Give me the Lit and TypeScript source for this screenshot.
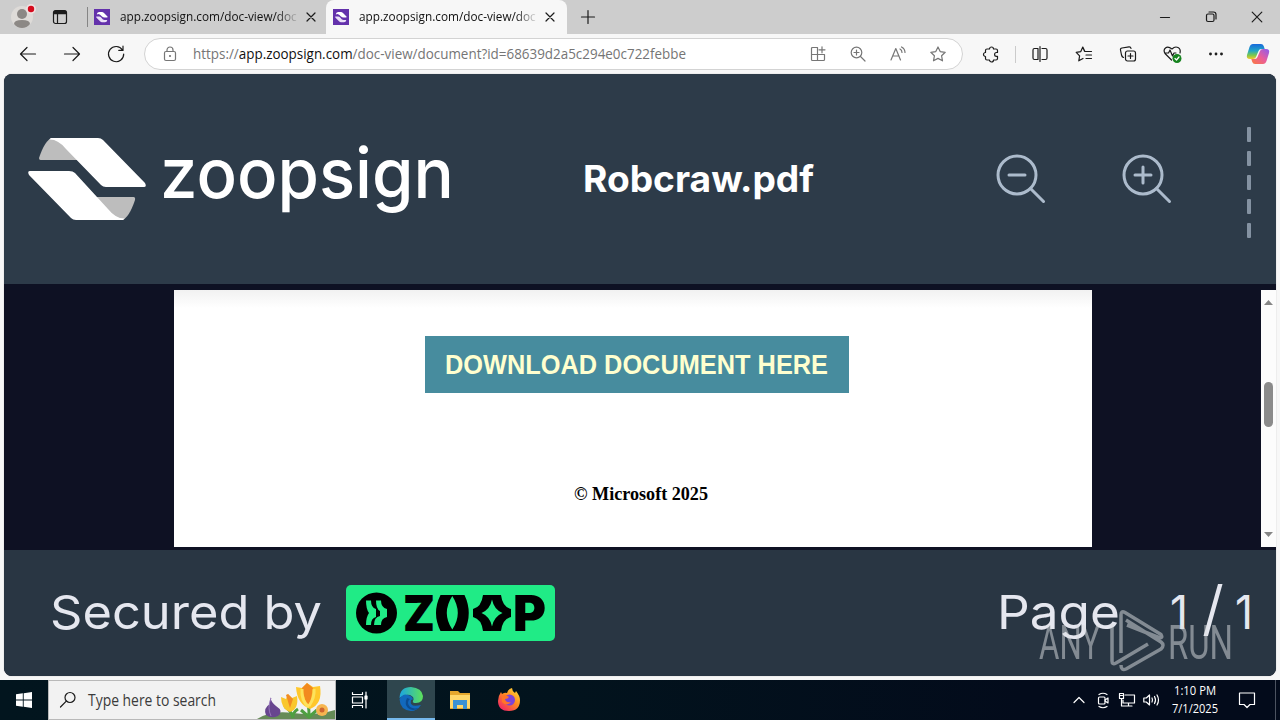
import { LitElement, html, svg, css } from "lit";
import { customElement } from "lit/decorators.js";

/** Outline icon on a square canvas of the given size. */
const icon = (size: number, body: unknown, cls = "") =>
  html`<svg class="ic ${cls}" width=${size} height=${size} viewBox="0 0 ${size} ${size}">${body}</svg>`;

/** One line of text set to an exact width. */
const line = (text: string, cls: string, width: number, height: number, baseline: number) =>
  html`<svg class="ln" width=${width} height=${height}>
    <text class=${cls} x="0" y=${baseline} textLength=${width} lengthAdjust="spacingAndGlyphs">${text}</text>
  </svg>`;

const close = svg`<path d="M4 4l8 8M12 4l-8 8"/>`;
const favicon = html`<svg class="ic" width="16" height="16" viewBox="0 0 16 16">
  <rect width="16" height="16" fill="#6331ab" stroke="none"/>
  <path d="M2.800 5.500Q3 3 5 3h3q1 0 2 1l3.500 3.500q.5 1-.5 1h-2.500q-1.500 0-2.500-1Q6 5 4.500 5z" fill="#fff" stroke="none"/>
  <path d="M2.200 7.500h3q1 0 2 1Q9 11 10.500 11h2.800q-.3 2.300-2.300 2.300H8q-1 0-2-1L2.300 8.500z" fill="#e9dff7" stroke="none"/>
</svg>`;

@customElement("app-root")
export class AppRoot extends LitElement {
  static styles = css`
    :host { display: flex; flex-direction: column; width: 1280px; height: 720px; overflow: hidden;
      background: #f7f7f7; position: relative; font-family: "Open Sans", "Noto Sans", sans-serif; }
    svg { display: block; flex: none; overflow: visible; }
    .ic { fill: none; stroke: #1b1b1b; stroke-width: 1.2; stroke-linecap: round; stroke-linejoin: round; }
    .gray { stroke: #767676; }
    .white { stroke: #fff; }
    .tabs { height: 34px; background: #cdcdcd; display: flex; align-items: center; flex: none; }
    .cell { display: flex; align-items: center; justify-content: center; flex: none; width: 44px; }
    .w40 { width: 40px; }
    .w46 { width: 46px; }
    .w24 { width: 24px; }
    .grow { flex: 1; }
    .profile { width: 44px; }
    .space { width: 32px; }
    .vline { width: 1px; height: 20px; background: #858585; margin-left: 11px; }
    .tab { display: flex; align-items: center; height: 34px; box-sizing: border-box; }
    .first { width: 238px; padding-left: 6px; }
    .active { width: 241px; background: #f7f7f7; border-radius: 8px 8px 0 0; padding-left: 7px; }
    .title { margin-left: 10px; width: 177px; -webkit-mask-image: linear-gradient(90deg, #000 157px, transparent 179px);
      mask-image: linear-gradient(90deg, #000 157px, transparent 179px); }
    .x { margin-left: 6px; }
    .tabtext { font-size: 12.5px; fill: #111; }
    .plus { width: 42px; }
    .bar { height: 40px; flex: none; display: flex; align-items: center; padding-left: 6px; box-sizing: border-box; }
    .address { width: 819px; height: 32px; box-sizing: border-box; border: 1px solid #d3d3d3; border-radius: 16px;
      background: #fff; display: flex; align-items: center; margin-left: 6px; padding: 0 4px 0 17px; }
    .url { font-size: 14px; fill: #757575; }
    .host { fill: #111; }
    .urlbox { margin-left: 15px; }
    .ext { width: 56px; }
    .sep { width: 1px; height: 17px; background: #cbcbcb; margin-right: 2px; margin-left: -4px; }
    .page { margin: 0 4px; height: 602px; flex: none; border-radius: 8px; overflow: hidden; display: flex; flex-direction: column; background: #0e1123; box-shadow: 0 0 1px #999; }
    .head { height: 210px; background: #2d3b49; display: flex; align-items: center; flex: none; }
    .mark { margin-left: 24px; }
    .brand { font: 500 69px Inter, sans-serif; fill: #fff; }
    .wordmark { margin-left: 14px; }
    .file { margin-left: 129px; }
    .filename { font: 700 36.5px Inter, sans-serif; fill: #fff; }
    .zoomout { margin-left: 182px; }
    .zoomin { margin-left: 76px; }
    .dashes { margin-left: 75px; width: 4px; height: 112px; display: flex; flex-direction: column; gap: 9px; margin-top: 7px; }
    .dash { width: 4px; height: 15px; background: #8492a2; border-radius: 1px; flex: none; }
    .viewer { height: 257px; padding: 6px 0 3px 170px; display: flex; justify-content: space-between; flex: none; }
    .doc { width: 918px; background: linear-gradient(#f1f1f1, #fff 18px); display: flex; flex-direction: column; align-items: flex-start; }
    .download { margin: 46px 0 0 251px; width: 424px; height: 56.5px; background: #478c9e; box-sizing: border-box; padding-left: 20px; }
    .dltext { font: 700 27px "Liberation Sans", sans-serif; fill: #ffffcf; }
    .copy { margin: 89px 0 0 400px; }
    .copytext { font: 700 18px "Liberation Serif", serif; fill: #000; }
    .scroll { width: 15px; background: #fcfcfc; display: flex; flex-direction: column; align-items: center; }
    .up { margin-top: 10px; }
    .thumb { width: 9px; height: 45px; background: #8b8b8b; border-radius: 5px; margin-top: 77px; }
    .down { margin-top: 105px; }
    .foot { height: 126px; background: #293643; display: flex; align-items: flex-start; flex: none; }
    .big { font: 400 47px Inter, sans-serif; fill: #e5e7ef; }
    .secured { margin-left: 46px; }
    .zoop { margin: 35px 0 0 24px; }
    .zl { font: 900 49.5px Inter, sans-serif; fill: #000; }
    .pageword { margin-left: 442px; }
    .num { margin-left: 53px; }
    .watermark { position: absolute; left: 1040px; top: 610px; opacity: .5; }
    .wt { font: 400 49px Roboto, sans-serif; fill: #dcdfe2; }
    .task { margin-top: 4px; height: 40px; flex: none; display: flex; align-items: center;
      background: linear-gradient(90deg, #02151e, #02131d 45%, #030b1b 80%, #030b1b); }
    .start { width: 48px; }
    .search { width: 288px; height: 40px; box-sizing: border-box; background: #f2f2f2; border: 1px solid #b9b9b9; display: flex; align-items: center; padding-left: 10px; }
    .searchtext { font-size: 15.5px; fill: #3b3b3b; }
    .sbox { margin-left: 11px; }
    .flowers { margin-left: auto; }
    .tv { width: 48px; margin-right: 3px; }
    .edge { width: 48px; height: 40px; background: #2f464e; box-sizing: border-box; border-bottom: 2px solid #76b9ed; }
    .app { width: 49px; }
    .clock { width: 64px; display: flex; flex-direction: column; align-items: center; }
    .clocktext { font-size: 12px; fill: #fff; }
    .note { width: 40px; }
    .show { width: 1px; height: 40px; background: #4c5360; margin: 0 4px 0 8px; }
  `;

  private tabs() {
    return html`<div class="tabs">
      <div class="cell profile">${icon(24, svg`<circle cx="12" cy="12" r="11" fill="#dedbd8" stroke="none"/>
        <circle cx="12" cy="9" r="5" fill="#8c8885" stroke="none"/><path d="M4 19q0-4 8-4t8 4q-3 4-8 4t-8-4z" fill="#8c8885" stroke="none"/>
        <circle cx="21" cy="4" r="5" fill="#eee0e0" stroke="none"/><circle cx="21" cy="4" r="3.2" fill="#d50b1d" stroke="none"/>`)}</div>
      <div class="cell space">${icon(16, svg`<rect x="1.500" y="1.500" width="13" height="13" rx="2"/><path d="M2 3.500h12" stroke-width="3.500" stroke-linecap="butt"/><path d="M5.500 4v10"/>`)}</div>
      <div class="vline"></div>
      <div class="tab first">${favicon}<div class="title">${line("app.zoopsign.com/doc-view/docu", "tabtext", 184, 20, 14)}</div><div class="x">${icon(16, close)}</div></div>
      <div class="tab active">${favicon}<div class="title">${line("app.zoopsign.com/doc-view/docu", "tabtext", 184, 20, 14)}</div><div class="x">${icon(16, close)}</div></div>
      <div class="cell plus">${icon(16, svg`<path d="M8 1.500v13M1.500 8h13"/>`)}</div>
      <div class="grow"></div>
      <div class="cell w46">${icon(12, svg`<path d="M1.500 6.500h9"/>`)}</div>
      <div class="cell w46">${icon(12, svg`<rect x="1.500" y="3" width="7.500" height="7.500" rx="1.500"/><path d="M4 1h4.500q2.500 0 2.500 2.500V8"/>`)}</div>
      <div class="cell w46">${icon(12, svg`<path d="M1.200 1.200l9.600 9.600M10.800 1.200l-9.600 9.600"/>`)}</div>
    </div>`;
  }

  private toolbar() {
    return html`<div class="bar">
      <div class="cell">${icon(18, svg`<path d="M16.500 9H1.500M8 2.500L1.500 9 8 15.500"/>`)}</div>
      <div class="cell">${icon(18, svg`<path d="M1.500 9h15M10 2.500L16.500 9 10 15.500"/>`)}</div>
      <div class="cell">${icon(18, svg`<path d="M15.500 5A7.600 7.600 0 1 0 16.700 9M16 1.200V5.400H11.800"/>`)}</div>
      <div class="address">
        ${icon(16, svg`<rect x="2.500" y="5.500" width="11" height="9" rx="1.500"/><path d="M5 5.500V4a3 3 0 0 1 6 0v1.500"/><circle cx="8" cy="10" r=".5"/>`, "gray")}
        <svg class="urlbox" width="493" height="22"><text class="url" x="0" y="16" textLength="493" lengthAdjust="spacingAndGlyphs">https://<tspan class="host">app.zoopsign.com</tspan>/doc-view/document?id=68639d2a5c294e0c722febbe</text></svg>
        <div class="grow"></div>
        <div class="cell w40">${icon(16, svg`<path d="M7.500 1.500H2.500q-1 0-1 1v11q0 1 1 1h11q1 0 1-1V8.500H1.500M7.500 1.500v13M12 .8v6M9 3.800h6"/>`, "gray")}</div>
        <div class="cell w40">${icon(16, svg`<circle cx="6.500" cy="6.500" r="5.300"/><path d="M10.500 10.500L15 15M6.500 4v5M4 6.500h5"/>`, "gray")}</div>
        <div class="cell w40">${icon(16, svg`<path d="M1 14L5.800 2.500 10.500 14M2.600 10h6.400M10 3q2 1 2 3.500M11.500 1q3.500 1.800 3.500 5.500"/>`, "gray")}</div>
        <div class="cell w40">${icon(16, svg`<path d="M8 1l2.200 4.600 5 .7-3.600 3.500.9 5L8 12.400l-4.500 2.400.9-5L.8 6.300l5-.7z"/>`, "gray")}</div>
      </div>
      <div class="cell ext">${icon(16, svg`<path d="M4 3h2.500a2 2 0 0 1 4 0H13q1.500 0 1.500 1.500V6.500h-1a1.900 1.900 0 1 0 0 3.800h1v2.200q0 1.500-1.500 1.500H10.500a2 2 0 0 1-4 0H4q-1.500 0-1.500-1.500V10.500a2 2 0 0 1 0-4V4.500Q2.500 3 4 3z"/>`)}</div>
      <div class="sep"></div>
      <div class="cell">${icon(16, svg`<path d="M6 2.500H2.500q-1.500 0-1.500 1.500v8q0 1.500 1.500 1.500H6V2.500M10 2.500h3.500q1.500 0 1.500 1.500v8q0 1.500-1.500 1.500H10M8 .5v15"/>`)}</div>
      <div class="cell">${icon(16, svg`<path d="M8.500 5.200L6.800 1 4.800 5.600.2 6.300l3.400 3.500-.8 5L7 12.500M6.800 1l2.100 4.500H15.500M10 9h5.500M10 12.500h5.500"/>`)}</div>
      <div class="cell">${icon(16, svg`<rect x="5.500" y="5" width="10" height="10" rx="2"/><path d="M10.500 7.500v5M8 10h5M3.500 11.500Q2 11 1.500 9L.5 4Q.2 2.300 2 2l7-1.200q1.600-.2 2 1.500"/>`)}</div>
      <div class="cell">${icon(18, svg`<path d="M8.500 15L2 8.500Q0 5 2.500 3T9 4Q12 1 15 2.500T17 8M2 8h3.500l1.500-3 2.500 6 1.500-3h2"/><circle cx="14" cy="13.500" r="4.500" fill="#16831f" stroke="none"/><path d="M12 13.500l1.500 1.500 2.500-3" stroke="#fff"/>`)}</div>
      <div class="cell">${icon(16, svg`<circle cx="2.500" cy="8" r=".8" fill="#111"/><circle cx="8" cy="8" r=".8" fill="#111"/><circle cx="13.500" cy="8" r=".8" fill="#111"/>`)}</div>
      <div class="cell w40">
        <svg width="22" height="20" viewBox="0 0 22 20">
          <defs>
            <linearGradient id="a" x2="0" y2="1"><stop stop-color="#1869dc"/><stop offset=".45" stop-color="#22a6c5"/><stop offset=".75" stop-color="#7cc84d"/><stop offset="1" stop-color="#f5c82c"/></linearGradient>
            <linearGradient id="b" x1="1" x2="0" y2="1"><stop stop-color="#8b5cf0"/><stop offset=".5" stop-color="#ea5d9a"/><stop offset="1" stop-color="#fb7b3c"/></linearGradient>
          </defs>
          <path d="M6 0h8q2 0 2.700 2l1 3h-3.500q-2 0-2.700 2L9 13q-.7 2-3 2H3q-4 0-3-4l2.500-8Q3.500 0 6 0z" fill="url(#a)"/>
          <path d="M16 20H8q-2 0-2.700-2l-1-3h3.500q2 0 2.700-2L13 7q.7-2 3-2h3q4 0 3 4l-2.500 8q-1 3-3.500 3z" fill="url(#b)"/>
        </svg>
      </div>
    </div>`;
  }

  private lens(plus: boolean, cls: string) {
    return html`<svg class=${cls} width="50" height="50" viewBox="0 0 50 50" fill="none" stroke="#acbbcc" stroke-width="3" stroke-linecap="round">
      <circle cx="21" cy="21" r="19"/><path d="M34.500 34.500L47.500 47.500M13 21h16"/>${plus ? svg`<path d="M21 13v16"/>` : ""}
    </svg>`;
  }

  private header() {
    return html`<div class="head">
      <svg class="mark" width="118" height="82" viewBox="0 0 118 82">
        <path d="M24 0Q17 2 11 20q0 2 1.500 2H50V8z" fill="#bdbdbd"/>
        <path d="M94 82q7-2 13-20 .5-3-1.500-3H68V74z" fill="#bdbdbd"/>
        <path d="M23 0h47q3 0 5 2l42 43q2 4-1 4H78q-3 0-5-2L38 11Q30 1 21 1.500z" fill="#fff"/>
        <path d="M95 82H48q-3 0-5-2L1 37q-2-4 1-4h39q4 0 6 2l33 36q8 10 17 9.500z" fill="#fff"/>
      </svg>
      <div class="wordmark">${line("zoopsign", "brand", 294, 82, 60)}</div>
      <div class="file">${line("Robcraw.pdf", "filename", 231, 50, 38)}</div>
      ${this.lens(false, "zoomout")}${this.lens(true, "zoomin")}
      <div class="dashes">${[0, 1, 2, 3, 4].map(() => html`<div class="dash"></div>`)}</div>
    </div>`;
  }

  private viewer() {
    return html`<div class="viewer">
      <div class="doc">
        <div class="download">${line("DOWNLOAD DOCUMENT HERE", "dltext", 383, 56, 38)}</div>
        <div class="copy">${line("© Microsoft 2025", "copytext", 134, 24, 17.500)}</div>
      </div>
      <div class="scroll">
        <svg class="up" width="9" height="5"><path d="M0 5L4.500 0 9 5z" fill="#858585"/></svg>
        <div class="thumb"></div>
        <svg class="down" width="9" height="5"><path d="M0 0h9L4.500 5z" fill="#858585"/></svg>
      </div>
    </div>`;
  }

  private footer() {
    return html`<div class="foot">
      <div class="secured">${line("Secured by", "big", 272, 100, 79)}</div>
      <svg class="zoop" width="209" height="56" viewBox="0 0 209 56">
        <rect width="209" height="56" rx="5" fill="#20eb86"/>
        <circle cx="30.500" cy="28" r="20.500"/>
        <path d="M20 15.500h5q0 7 5 8.500v8q-5 1-5 8h-5q0-8 3-12-3-4-3-12.500z" fill="#20eb86"/>
        <path d="M30 15.500h5q0 7 6 8.500v8q-6 1-6 8h-7q0-8 6-9v-5q-4-2-4-10.500z" fill="#20eb86"/>
        <text class="zl" x="57" y="45.500" textLength="32" lengthAdjust="spacingAndGlyphs">Z</text>
        <path fill-rule="evenodd" d="M94.500 10h24q8.500 18 0 36h-24q-9-18 0-36zM106.300 11q-11 17 0 33.500 11-16.500 0-33.500z"/>
        <path fill-rule="evenodd" d="M137 10h18q1.500 12 10 14v8q-8.500 2-10 14h-18q-1.500-12-10-14v-8q8.500-2 10-14zM146 14.500q-2 10-10.500 13.500 8.500 3.500 10.500 13.500 2-10 10.500-13.500-8.500-3.500-10.500-13.500z"/>
        <text class="zl" x="167" y="45.500" textLength="33" lengthAdjust="spacingAndGlyphs">P</text>
      </svg>
      <div class="pageword">${line("Page", "big", 123, 100, 79)}</div>
      <svg class="num" width="80" height="100">
        <text class="big" x="-3" y="79" textLength="18" lengthAdjust="spacingAndGlyphs">1</text>
        <path d="M45 34h4.500L35 86h-4.500z" fill="#e5e7ef"/>
        <text class="big" x="62" y="79" textLength="18" lengthAdjust="spacingAndGlyphs">1</text>
      </svg>
    </div>`;
  }

  private taskbar() {
    return html`<div class="task">
      <div class="cell start"><svg width="16" height="16" fill="#fff"><path d="M0 2.300L6.800 1.300V7.500H0zM7.700 1.200L16 0v7.500H7.700zM0 8.400h6.800v6.300L0 13.700zM7.700 8.400H16V16l-8.300-1.200z"/></svg></div>
      <div class="search">
        ${icon(18, svg`<circle cx="11" cy="6.500" r="5"/><path d="M7.300 10.200L1.500 16"/>`)}
        <div class="sbox">${line("Type here to search", "searchtext", 128, 24, 17.500)}</div>
        <svg class="flowers" width="78" height="38" viewBox="0 0 78 38">
          <path d="M0 38Q14 29 36 32t42-3v9z" fill="#668b57"/>
          <path d="M36 37q-2-8-8-11M36 37q-1-5 5-9M52 34q0-10-2-14M44 29l8 7 8-7" stroke="#4f9f42" stroke-width="3" fill="none"/>
          <path d="M13 16q1 5 6 9 8 5 2 10-7 3-12-1-3-7 4-11z" fill="#68468f"/><path d="M14 17q-4 10 0 18" stroke="#9574b9" fill="none"/>
          <path d="M24 16l5 2 2-5 4 4 5-2q2 13-7 16-9-3-9-15z" fill="#f9c72d"/><path d="M29 14l2-1 5 5-3 9z" fill="#f18b23"/>
          <path d="M39 6l6 1 5-5 6 4 7-1q3 18-10 23-13-5-14-22z" fill="#ffc72b"/><path d="M45 7l5-5 6 5-3 17-4-2z" fill="#f28a1f"/><path d="M45 8q-1 12 7 18M57 8q1 8-5 17" stroke="#fde25c" stroke-width="3" fill="none"/>
          <circle cx="65" cy="29" r="6" fill="#f6b550"/><circle cx="65" cy="29" r="2.500" fill="#cf652f"/>
        </svg>
      </div>
      <div class="cell tv">${icon(18, svg`<path d="M1.500 1.500v2h10v-2M1.500 16.500v-2h10v2M1.500 6h10v6h-10zM15 1v16"/><rect x="14" y="5" width="2" height="3" fill="#fff"/>`, "white")}</div>
      <div class="cell edge"><svg width="24" height="24" viewBox="0 0 24 24">
        <defs><linearGradient id="e"><stop stop-color="#1ba4e2"/><stop offset="1" stop-color="#5de15a"/></linearGradient></defs>
        <path d="M.5 11Q1 0 12 0q11 1 12 9 0 7-7 7-4 0-3-2 2-4-3-6-6-1-10.500 3z" fill="url(#e)"/>
        <path d="M.5 12Q4 6 9 8q5 1 5 5 0-1-2 0-2 8 10 5-4 6-10 6Q1 23 .5 12z" fill="#1269bd"/>
        <path d="M8 11q-3 6 1 10 5 4 11 0-10 2-11-5 0-3 2-4z" fill="#0c4c91"/>
      </svg></div>
      <div class="cell app"><svg width="22" height="20" viewBox="0 0 22 20">
        <path d="M1 1h8l2 2h10v16H1z" fill="#e5a72d"/><path d="M1 5h20v13H1z" fill="#ffd76a"/><path d="M4 19v-9h14v9h-4v-4H8v4z" fill="#3b91d3"/>
      </svg></div>
      <div class="cell app"><svg width="22" height="24" viewBox="0 0 22 24">
        <defs><linearGradient id="f" x1="1" x2=".2" y2="1"><stop stop-color="#ffe63c"/><stop offset=".5" stop-color="#ff8a20"/><stop offset="1" stop-color="#f22368"/></linearGradient></defs>
        <path d="M3 4l1 2q3-2 5-1 1-4 5-5 0 3 3 5l1-2q4 5 4 9 0 11-11 11T0 13q0-5 3-9z" fill="url(#f)"/><circle cx="11.500" cy="12" r="5.500" fill="#7c43d8"/><path d="M4 8q4-2 7 1-1 2-4 2 1 4 6 3-4 5-9 0z" fill="#ff7528"/>
      </svg></div>
      <div class="grow"></div>
      <div class="cell w24">${icon(12, svg`<path d="M1 8.500l5-5 5 5"/>`, "white")}</div>
      <div class="cell w24">${icon(16, svg`<rect x="3.500" y="5" width="6.500" height="7" rx="1"/><path d="M10 8l3-2v5l-3-2M4 2.500q4-2.500 8 0M4 14.500q4 2.500 8 0"/>`, "white")}</div>
      <div class="cell w24">${icon(16, svg`<path d="M6 3h9.500v8H4V8M9.500 11v3M6 14h7M.5 1.500h4v5h-4zM2.500 6.500V14H6M1.500 3.500h2"/>`, "white")}</div>
      <div class="cell w24">${icon(16, svg`<path d="M.8 6h2.500L6.500 3v10L3.300 10H.8zM9 6q1 2 0 4M11.500 4.500q2 3.500 0 7M14 3q3 5 0 10"/>`, "white")}</div>
      <div class="clock">${line("1:10 PM", "clocktext", 42, 18, 13)}${line("7/1/2025", "clocktext", 46, 18, 13)}</div>
      <div class="cell note">${icon(18, svg`<path d="M1.500 2h15v11.500H12l-3 3-3-3H1.500z"/>`, "white")}</div>
      <div class="show"></div>
    </div>`;
  }

  render() {
    return html`${this.tabs()}${this.toolbar()}
      <div class="page">${this.header()}${this.viewer()}${this.footer()}</div>
      ${this.taskbar()}
      <svg class="watermark" width="192" height="62" viewBox="0 0 192 62">
        <text class="wt" x="-1" y="49" textLength="61" lengthAdjust="spacingAndGlyphs">ANY</text>
        <path d="M81 43V5Q81 0 85 2.500L121 24.500Q123 28 120 28L87 15M72 14V51Q72 55 76 53L108 34M81 55q0 6 5 4L121 39q4-4 0-7L86 10" fill="none" stroke="#dcdfe2" stroke-width="3.500" stroke-linejoin="round"/>
        <text class="wt" x="128" y="49" textLength="65" lengthAdjust="spacingAndGlyphs">RUN</text>
      </svg>`;
  }
}
